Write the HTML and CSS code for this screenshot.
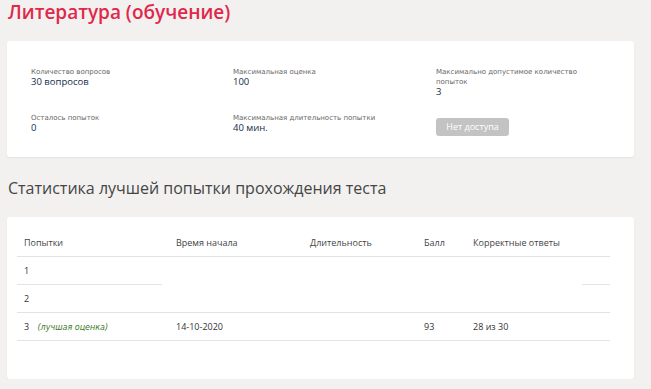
FILE: index.html
```html
<!DOCTYPE html>
<html lang="ru">
<head>
    <meta charset="UTF-8">
    <meta name="viewport" content="width=device-width, initial-scale=1.0">
    <title>Литература (обучение)</title>
    <link rel="stylesheet" href="styles.css">
</head>
<body>
    <div class="page">
        <h1 class="title">Литература (обучение)</h1>

        <div class="card info-card">
            <div class="info-grid">
                <div class="info-item">
                    <div class="info-label">Количество вопросов</div>
                    <div class="info-value">30 вопросов</div>
                </div>
                <div class="info-item">
                    <div class="info-label">Максимальная оценка</div>
                    <div class="info-value">100</div>
                </div>
                <div class="info-item narrow">
                    <div class="info-label">Максимально допустимое количество попыток</div>
                    <div class="info-value">3</div>
                </div>
                <div class="info-item">
                    <div class="info-label">Осталось попыток</div>
                    <div class="info-value">0</div>
                </div>
                <div class="info-item">
                    <div class="info-label">Максимальная длительность попытки</div>
                    <div class="info-value">40 мин.</div>
                </div>
                <div class="info-item">
                    <button class="no-access" disabled>Нет доступа</button>
                </div>
            </div>
        </div>

        <h2 class="section-title">Статистика лучшей попытки прохождения теста</h2>

        <div class="card stats-card">
            <table class="stats">
                <thead>
                    <tr>
                        <th class="col-try">Попытки</th>
                        <th class="col-start">Время начала</th>
                        <th class="col-dur">Длительность</th>
                        <th class="col-score">Балл</th>
                        <th class="col-correct">Корректные ответы</th>
                        <th class="col-extra"></th>
                    </tr>
                </thead>
                <tbody>
                    <tr>
                        <td>1</td>
                        <td colspan="4" rowspan="2"></td>
                        <td></td>
                    </tr>
                    <tr>
                        <td>2</td>
                        <td></td>
                    </tr>
                    <tr>
                        <td>3 <span class="best">(лучшая оценка)</span></td>
                        <td class="col-start">14-10-2020</td>
                        <td></td>
                        <td>93</td>
                        <td>28 из 30</td>
                        <td></td>
                    </tr>
                </tbody>
            </table>
        </div>
    </div>
</body>
</html>
```

FILE: styles.css
```css
body {
    margin: 0;
    background: #f2f1f0;
    font-family: "Open Sans", Arial, sans-serif;
    color: #333;
}

.page {
    width: 627px;
    padding: 0 0 0 7px;
}

.title {
    margin: 0;
    padding: 0 1px;
    font-size: 19px;
    font-weight: 600;
    line-height: 24px;
    color: #e0284b;
}

.card {
    background: #fff;
    border-radius: 3px;
    box-shadow: 0 1px 2px rgba(0, 0, 0, 0.06);
}

/* Test info */
.info-card {
    margin-top: 17px;
    padding: 26px 0 21px 24px;
}

.info-grid {
    display: grid;
    grid-template-columns: 202px 203px 1fr;
    row-gap: 16px;
}

.info-item.narrow {
    max-width: 160px;
}

.info-label {
    font-family: "DejaVu Sans", Tahoma, sans-serif;
    font-size: 7px;
    line-height: 10px;
    color: #666;
}

.info-value {
    font-size: 9.5px;
    font-weight: 400;
    line-height: 10px;
    color: #142c47;
}

.no-access {
    width: 73px;
    height: 18px;
    margin-top: 1px;
    padding: 0;
    border: none;
    border-radius: 3px;
    background: #c3c3c3;
    color: #fff;
    font-family: "Open Sans", Arial, sans-serif;
    font-size: 9px;
    font-weight: 400;
}

.section-title {
    margin: 20px 0 0;
    padding: 0 1px;
    font-size: 16px;
    font-weight: 400;
    line-height: 22px;
    color: #454545;
}

/* Statistics */
.stats-card {
    margin-top: 18px;
    padding: 12px 24px 38px 10px;
}

.stats {
    width: 100%;
    border-collapse: collapse;
    font-size: 9px;
    color: #333;
}

.stats th,
.stats td {
    height: 27px;
    padding: 0 7px;
    text-align: left;
    font-weight: 400;
    border-bottom: 1px solid #e3e3e3;
}

.stats th {
    color: #444;
}

.stats .col-try { width: 131px; }
.stats .col-start { width: 120px; padding-left: 14px; }
.stats .col-dur { width: 100px; }
.stats .col-score { width: 35px; }
.stats .col-correct { width: 102px; }

.best {
    margin-left: 6px;
    font-family: "DejaVu Sans", Tahoma, sans-serif;
    font-size: 8px;
    font-style: italic;
    color: #3d7a2c;
}
```
